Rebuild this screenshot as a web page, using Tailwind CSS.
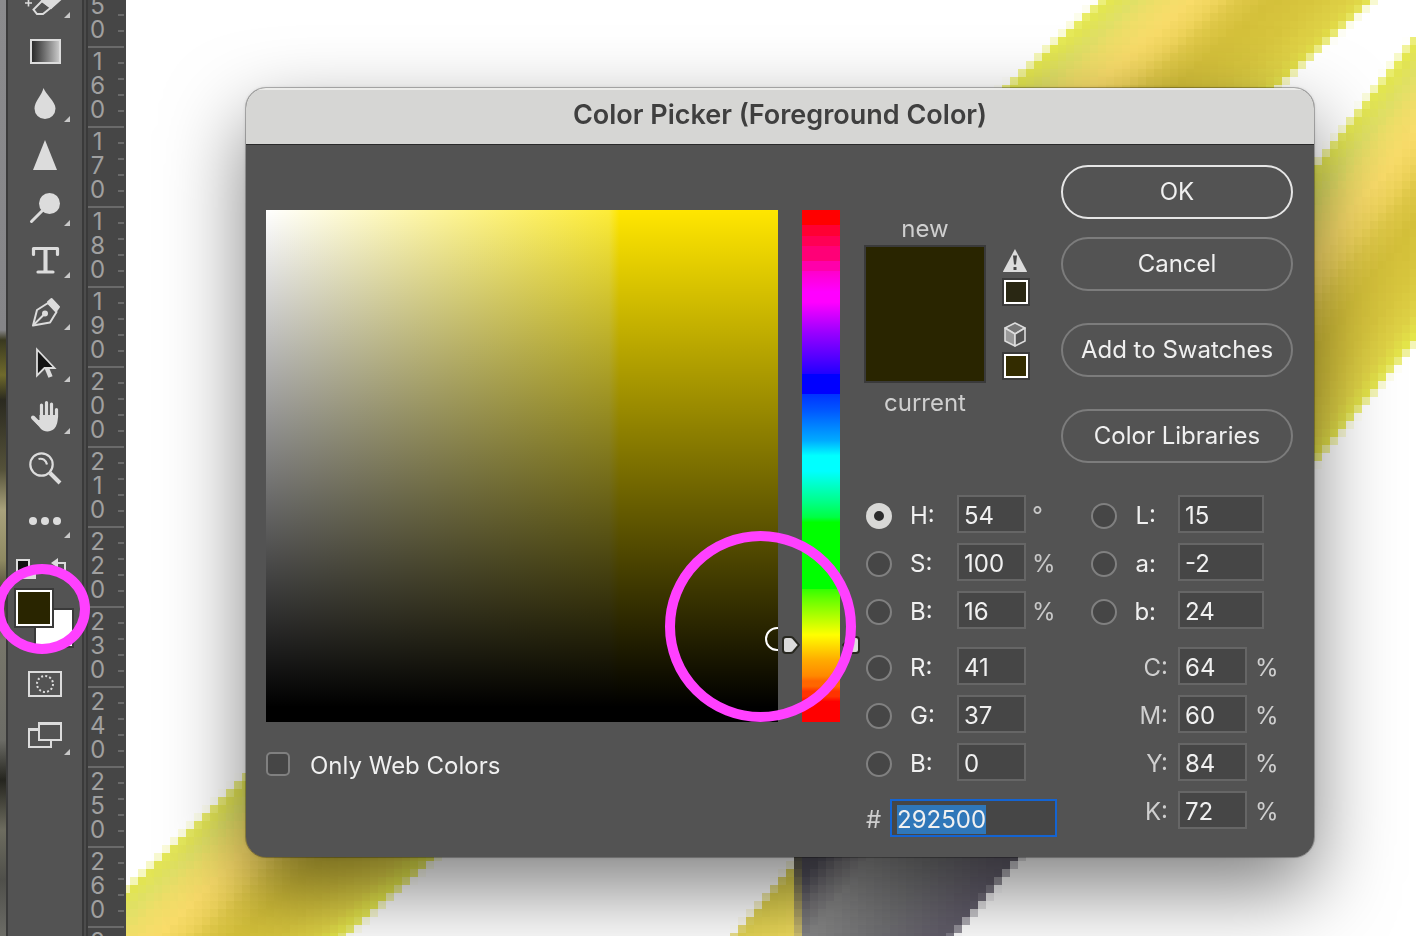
<!DOCTYPE html>
<html lang="en">
<head>
    <meta charset="UTF-8">
    <meta name="viewport" content="width=device-width, initial-scale=1.0">
    <title>Color Picker</title>
    <script src="https://cdn.jsdelivr.net/npm/@tailwindcss/browser@4"></script>
</head>
<body class="relative flex h-screen overflow-hidden bg-white font-['Inter',sans-serif] text-2xl text-[#f0f0f0]">
    <!-- Desktop showing behind the app -->
    <div class="w-[6px] shrink-0 bg-[linear-gradient(#8b8b8d_0,#858588_330px,#3a3920_340px,#6f6a2c_375px,#2b2a20_400px,#55523a_470px,#a9a27c_510px,#8f8a62_560px,#3c3b2e_600px,#77766a_640px,#6c6c66_740px,#25251f_780px,#6d6c5f_830px,#4f4f4a_880px,#6c6c66_100%)]"></div>

    <!-- Toolbar -->
    <nav class="w-[78px] shrink-0 overflow-hidden border-x-2 border-[#3a3a3a] bg-[#535353] text-[#dcdcdc]" aria-label="Tools">
        <div class="-mt-[27px] flex flex-col">
            <button class="relative flex h-[52px] items-center justify-center" aria-label="Eraser">
                <svg class="size-10" viewBox="0 0 40 40" fill="none" stroke="currentColor" stroke-width="2"><path d="M0 24h7M3.500 20.500v7" stroke-width="1.600"/><path d="M17 22L28 11l8 9-10 9z" fill="currentColor"/><path d="M17 22l-8.500 8.500 3.500 4.500h6l8-6.500z"/></svg>
                <svg class="absolute right-3 bottom-[7px] size-[6px]" viewBox="0 0 6 6" fill="#c8c8c8"><path d="M6 0v6H0z"/></svg>
            </button>
            <button class="flex h-[52px] items-center justify-center" aria-label="Gradient">
                <span class="h-[25px] w-[31px] border-2 border-[#dcdcdc] bg-linear-to-r from-[#2c2c2c] to-[#c8c8c8]"></span>
            </button>
            <button class="relative flex h-[52px] items-center justify-center" aria-label="Blur">
                <svg class="size-10" viewBox="0 0 40 40" fill="currentColor"><path d="M18.500 5c2 6 12 13.500 12 20.500a10.500 10.500 0 0 1-21 0C9.500 18.500 17 12 18.500 5z"/></svg>
                <svg class="absolute right-3 bottom-[7px] size-[6px]" viewBox="0 0 6 6" fill="#c8c8c8"><path d="M6 0v6H0z"/></svg>
            </button>
            <button class="flex h-[52px] items-center justify-center" aria-label="Sharpen">
                <svg class="size-10" viewBox="0 0 40 40" fill="currentColor"><path d="M20 5l12 30H8z"/></svg>
            </button>
            <button class="relative flex h-[52px] items-center justify-center" aria-label="Dodge">
                <svg class="size-10" viewBox="0 0 40 40" fill="currentColor"><circle cx="24.500" cy="16.500" r="10.500"/><path d="M18 23L6.500 34.500" stroke="currentColor" stroke-width="3" stroke-linecap="round"/></svg>
                <svg class="absolute right-3 bottom-[7px] size-[6px]" viewBox="0 0 6 6" fill="#c8c8c8"><path d="M6 0v6H0z"/></svg>
            </button>
            <button class="relative flex h-[52px] items-center justify-center" aria-label="Type">
                <svg class="size-10" viewBox="0 0 40 40" fill="none" stroke="currentColor" stroke-width="3.200"><path d="M8.500 15.500V9.500h24v6M20.500 9.500v23M13 33h15" stroke-linecap="round" stroke-linejoin="round"/><path d="M20.500 9v24" stroke-width="4"/></svg>
                <svg class="absolute right-3 bottom-[7px] size-[6px]" viewBox="0 0 6 6" fill="#c8c8c8"><path d="M6 0v6H0z"/></svg>
            </button>
            <button class="relative flex h-[52px] items-center justify-center" aria-label="Pen">
                <svg class="size-10" viewBox="0 0 40 40" fill="none" stroke="currentColor" stroke-width="2" stroke-linejoin="round"><path d="M8 34.500l4-15.500 11-7 8.500 9-6.500 10.500z"/><path d="M9 33.500l10-10"/><circle cx="20" cy="22.500" r="2" fill="currentColor"/><path d="M26.500 8l7.500 8-2.500 3.500L23 11z" fill="currentColor"/></svg>
                <svg class="absolute right-3 bottom-[7px] size-[6px]" viewBox="0 0 6 6" fill="#c8c8c8"><path d="M6 0v6H0z"/></svg>
            </button>
            <button class="relative flex h-[52px] items-center justify-center" aria-label="Path selection">
                <svg class="size-10" viewBox="0 0 40 40"><path d="M21 23l4.500 11" stroke="currentColor" stroke-width="4.500"/><path d="M12 6.500v26l7.500-7.500h10z" fill="#151515" stroke="currentColor" stroke-width="1.800"/></svg>
                <svg class="absolute right-3 bottom-[7px] size-[6px]" viewBox="0 0 6 6" fill="#c8c8c8"><path d="M6 0v6H0z"/></svg>
            </button>
            <button class="relative flex h-[52px] items-center justify-center" aria-label="Hand">
                <svg class="size-10" viewBox="0 0 40 40" fill="none" stroke="currentColor" stroke-linecap="round"><path d="M16.500 10v14M21.500 7.500V24M26.500 9v15M31.500 14.500V22" stroke-width="3.200"/><path d="M8 22.500l6 6" stroke-width="4"/><path d="M14.500 20h18.500c0 6-1 11-4 14-4 3.500-10 3-13 0l-7-8.500 5.500-.5z" fill="currentColor" stroke="none"/></svg>
                <svg class="absolute right-3 bottom-[7px] size-[6px]" viewBox="0 0 6 6" fill="#c8c8c8"><path d="M6 0v6H0z"/></svg>
            </button>
            <button class="flex h-[52px] items-center justify-center" aria-label="Zoom">
                <svg class="size-10" viewBox="0 0 40 40" fill="none" stroke="currentColor" stroke-width="2.200"><circle cx="16.500" cy="17.500" r="11.200"/><path d="M13.500 12c4-1 7.500 1 8.500 5.500"/><path d="M25 26L35 36" stroke-width="4"/></svg>
            </button>
            <button class="relative flex h-[52px] items-center justify-center gap-1 pt-1" aria-label="Edit toolbar">
                <span class="size-2 rounded-full bg-[#dcdcdc]"></span>
                <span class="size-2 rounded-full bg-[#dcdcdc]"></span>
                <span class="size-2 rounded-full bg-[#dcdcdc]"></span>
                <svg class="absolute right-3 bottom-[7px] size-[6px]" viewBox="0 0 6 6" fill="#c8c8c8"><path d="M6 0v6H0z"/></svg>
            </button>
            <!-- Foreground / background swatches -->
            <div class="relative h-[113px]">
                <svg class="absolute top-3 left-2" width="60" height="24" viewBox="0 0 60 24" fill="none"><path d="M7 10h13v12H7z" fill="#dcdcdc"/><path d="M1 3h12v14H1z" fill="#111" stroke="#dcdcdc" stroke-width="2"/><path d="M42 6h7v12" stroke="#dcdcdc" stroke-width="2"/><path d="M42 1v10l-7-5z" fill="#dcdcdc"/></svg>
                <button class="absolute top-[63px] left-[26px] size-[40px] border-2 border-[#3a3a3a] bg-white" aria-label="Background color"></button>
                <button class="absolute top-[43px] left-[6px] size-[40px] border-2 border-[#3a3a3a] bg-white p-[2px]" aria-label="Foreground color"><span class="block size-full bg-[#292500]"></span></button>
            </div>
            <button class="flex h-[52px] items-center justify-center" aria-label="Quick mask">
                <svg class="size-10" viewBox="0 0 40 40" fill="none" stroke="currentColor" stroke-width="2"><path d="M4 8h32v24H4z"/><circle cx="20" cy="20" r="8" stroke-dasharray="2 2.190"/></svg>
            </button>
            <button class="relative flex h-[52px] items-center justify-center" aria-label="Screen mode">
                <svg class="size-10" viewBox="0 0 40 40" fill="#535353" stroke="currentColor" stroke-width="2"><path d="M4 13h22v18H4z"/><path d="M3 13.500h10" stroke-width="3"/><path d="M14 7h22v17H14z"/><path d="M13 7.500h24" stroke-width="3"/></svg>
                <svg class="absolute right-3 bottom-[7px] size-[6px]" viewBox="0 0 6 6" fill="#c8c8c8"><path d="M6 0v6H0z"/></svg>
            </button>
        </div>
    </nav>

    <!-- Vertical ruler -->
    <div class="w-[42px] shrink-0 overflow-hidden border-l-2 border-[#4c4c4c] bg-[#464646]">
        <div id="ruler" class="-mt-[34px] border-l-2 border-[#3a3a3a] pr-[2px]"></div>
    </div>

    <!-- Document -->
    <main class="relative flex-1 overflow-hidden">
        <canvas id="artwork" width="162" height="118" class="absolute -top-[3px] -left-1 h-[944px] w-[1296px] max-w-none [image-rendering:pixelated]"></canvas>

        <!-- Color picker dialog -->
        <section class="absolute top-[88px] right-[102px] left-[120px] overflow-hidden rounded-[20px] bg-[#535353] pb-5 shadow-[0_0_4px_rgba(0,0,0,0.15),0_32px_80px_rgba(0,0,0,0.5)] outline outline-black/25" aria-labelledby="title">
            <header class="flex h-[57px] items-center justify-center border-t-2 border-b border-t-[#ececea] border-b-[#2a2a2a] bg-[#d6d6d4] pb-1">
                <h1 id="title" class="text-[27px] font-semibold text-[#3f3f3f]">Color Picker (Foreground Color)</h1>
            </header>

            <div class="flex pr-[21px] pl-5">
                <div class="shrink-0 pt-[65px]">
                    <div class="flex gap-6">
                        <div class="relative size-[512px] overflow-hidden bg-[linear-gradient(transparent,#000_97%),linear-gradient(90deg,#fff,#fdec38_67%,#ffe600_69%)]">
                            <span class="absolute top-[417px] left-[499px] size-6 rounded-full border-2 border-white"></span>
                        </div>
                        <div class="relative w-[38px] bg-[linear-gradient(#f00_3%,#f03_3%,#f03_5%,#f05_5%,#f05_7%,#f07_7%,#f07_10%,#f0a_10%,#f0a_12%,#f0c_12%,#f0f_16%,#f0f_18%,#90f_24%,#5000ff_29%,#20f_32%,#00f_32%,#00f_36%,#03f_36%,#05f_39%,#0080ff_42%,#0af_45%,#0ff_48%,#0ff_51%,#0f8_57%,#0f4_60%,#0f0_61%,#0f0_74%,#3f0_74%,#6f0_76%,#ff0_83%,#fc0_86%,#fa0_88%,#f80_91%,#f60_92%,#f60_93%,#f30_94%,#f30_95%,#f00_96%)]">
                            <svg class="absolute top-[426px] -left-5" width="18" height="18" viewBox="0 0 18 18"><path d="M4 1h4q2 0 3 1l6 7-6 7q-1 1-3 1H4q-3 0-3-3V4q0-3 3-3z" fill="#dcdcdc" stroke="#282820" stroke-width="2"/></svg>
                            <svg class="absolute top-[426px] -right-5" width="18" height="18" viewBox="0 0 18 18"><path d="M14 1h-4q-2 0-3 1L1 9l6 7q1 1 3 1h4q3 0 3-3V4q0-3-3-3z" fill="#dcdcdc" stroke="#282820" stroke-width="2"/></svg>
                        </div>
                    </div>
                    <div class="mt-[30px] flex h-6 items-center">
                        <input type="checkbox" id="web-only" class="size-6 appearance-none rounded-[5px] border-2 border-[#808080] bg-[#464646]">
                        <label for="web-only" class="mt-1 ml-5">Only Web Colors</label>
                    </div>
                </div>

                <div class="ml-6 flex-1 pt-5">
                    <div class="flex justify-between">
                        <div class="flex gap-4">
                            <div class="w-[122px] pt-[52px] text-center leading-6 text-[#cfcfcf]">
                                <p>new</p>
                                <div class="mt-1 mb-2 h-[138px] border-2 border-[#3a3a3a] bg-[#292500]"></div>
                                <p>current</p>
                            </div>
                            <div class="flex flex-col items-center pt-[84px]">
                                <svg width="28" height="24" viewBox="0 0 28 24"><path d="M13 0l12 22.500q0 .5-1 .5H2q-1 0-1-.5z" fill="#dcdcdc"/><path d="M11 6.500h4l-1 9h-2zM11.500 18h3v3h-3z" fill="#464646"/></svg>
                                <button class="mt-[5px] size-7 border-2 border-[#3a3a3a] bg-white p-[2px]" aria-label="Use closest printable color"><span class="block size-full bg-[#292713]"></span></button>
                                <svg class="mt-4" width="26" height="26" viewBox="0 0 26 26" stroke="#dcdcdc" stroke-width="1.600" stroke-linejoin="round"><path d="M12 1l10 5-10 6L2 6z" fill="#777"/><path d="M2 6l10 6v12L2 19z" fill="#999"/><path d="M22 6l-10 6v12l10-5z" fill="#535353"/></svg>
                                <button class="mt-1 size-7 border-2 border-[#3a3a3a] bg-white p-[2px]" aria-label="Use closest web color"><span class="block size-full bg-[#332c00]"></span></button>
                            </div>
                        </div>
                        <div class="flex w-[232px] flex-col">
                            <button class="h-[54px] rounded-full border-2 border-[#e6e6e6]">OK</button>
                            <button class="mt-[18px] h-[54px] rounded-full border-2 border-[#7c7c7c]">Cancel</button>
                            <button class="mt-8 h-[54px] rounded-full border-2 border-[#7c7c7c]">Add to Swatches</button>
                            <button class="mt-8 h-[54px] rounded-full border-2 border-[#7c7c7c]">Color Libraries</button>
                        </div>
                    </div>

                    <form class="mt-8 flex justify-between">
                        <div class="flex flex-col gap-[10px]">
                            <div class="flex h-[38px] items-center pl-[2px]">
                                <input type="radio" name="channel" id="ch-h" checked class="mt-1 size-[26px] appearance-none rounded-full border-2 border-[#808080] bg-[#464646] checked:border-[8px] checked:border-[#d8d8d6] checked:bg-[#2c2c2c]">
                                <label for="ch-h" class="mt-1 ml-[18px] w-[47px]">H:</label>
                                <input type="text" aria-label="Hue" value="54" class="h-[38px] w-[69px] border-2 border-[#666] bg-[#464646] pt-[3px] pl-[5px]">
                                <span class="mt-1 ml-[6px] text-[#c8c8c8]">°</span>
                            </div>
                            <div class="flex h-[38px] items-center pl-[2px]">
                                <input type="radio" name="channel" id="ch-s" class="mt-1 size-[26px] appearance-none rounded-full border-2 border-[#808080] bg-[#464646]">
                                <label for="ch-s" class="mt-1 ml-[18px] w-[47px]">S:</label>
                                <input type="text" aria-label="Saturation" value="100" class="h-[38px] w-[69px] border-2 border-[#666] bg-[#464646] pt-[3px] pl-[5px]">
                                <span class="mt-1 ml-[6px] text-[#c8c8c8]">%</span>
                            </div>
                            <div class="flex h-[38px] items-center pl-[2px]">
                                <input type="radio" name="channel" id="ch-b" class="mt-1 size-[26px] appearance-none rounded-full border-2 border-[#808080] bg-[#464646]">
                                <label for="ch-b" class="mt-1 ml-[18px] w-[47px]">B:</label>
                                <input type="text" aria-label="Brightness" value="16" class="h-[38px] w-[69px] border-2 border-[#666] bg-[#464646] pt-[3px] pl-[5px]">
                                <span class="mt-1 ml-[6px] text-[#c8c8c8]">%</span>
                            </div>
                            <div class="mt-2 flex h-[38px] items-center pl-[2px]">
                                <input type="radio" name="channel" id="ch-r" class="mt-1 size-[26px] appearance-none rounded-full border-2 border-[#808080] bg-[#464646]">
                                <label for="ch-r" class="mt-1 ml-[18px] w-[47px]">R:</label>
                                <input type="text" aria-label="Red" value="41" class="h-[38px] w-[69px] border-2 border-[#666] bg-[#464646] pt-[3px] pl-[5px]">
                            </div>
                            <div class="flex h-[38px] items-center pl-[2px]">
                                <input type="radio" name="channel" id="ch-g" class="mt-1 size-[26px] appearance-none rounded-full border-2 border-[#808080] bg-[#464646]">
                                <label for="ch-g" class="mt-1 ml-[18px] w-[47px]">G:</label>
                                <input type="text" aria-label="Green" value="37" class="h-[38px] w-[69px] border-2 border-[#666] bg-[#464646] pt-[3px] pl-[5px]">
                            </div>
                            <div class="flex h-[38px] items-center pl-[2px]">
                                <input type="radio" name="channel" id="ch-blue" class="mt-1 size-[26px] appearance-none rounded-full border-2 border-[#808080] bg-[#464646]">
                                <label for="ch-blue" class="mt-1 ml-[18px] w-[47px]">B:</label>
                                <input type="text" aria-label="Blue" value="0" class="h-[38px] w-[69px] border-2 border-[#666] bg-[#464646] pt-[3px] pl-[5px]">
                            </div>
                            <div class="mt-2 flex h-[38px] items-center pl-[2px]">
                                <label for="hex" class="mt-1 w-6 text-[#cfcfcf]">#</label>
                                <input type="text" id="hex" value="292500" class="h-[38px] w-[167px] border-2 border-[#1464d2] bg-[#464646] pt-[2px] pl-[5px] outline-none selection:bg-[#2f77b9] selection:text-[#f0f0f0]">
                            </div>
                        </div>

                        <div class="flex w-[202px] flex-col gap-[10px]">
                            <div class="flex h-[38px] items-center">
                                <input type="radio" name="channel" id="ch-l" class="mt-1 size-[26px] appearance-none rounded-full border-2 border-[#808080] bg-[#464646]">
                                <label for="ch-l" class="mt-1 w-[39px] text-right">L:</label>
                                <input type="text" aria-label="Lightness" value="15" class="ml-[22px] h-[38px] w-[86px] border-2 border-[#666] bg-[#464646] pt-[3px] pl-[5px]">
                            </div>
                            <div class="flex h-[38px] items-center">
                                <input type="radio" name="channel" id="ch-a" class="mt-1 size-[26px] appearance-none rounded-full border-2 border-[#808080] bg-[#464646]">
                                <label for="ch-a" class="mt-1 w-[39px] text-right">a:</label>
                                <input type="text" aria-label="Lab a" value="-2" class="ml-[22px] h-[38px] w-[86px] border-2 border-[#666] bg-[#464646] pt-[3px] pl-[5px]">
                            </div>
                            <div class="flex h-[38px] items-center">
                                <input type="radio" name="channel" id="ch-lb" class="mt-1 size-[26px] appearance-none rounded-full border-2 border-[#808080] bg-[#464646]">
                                <label for="ch-lb" class="mt-1 w-[39px] text-right">b:</label>
                                <input type="text" aria-label="Lab b" value="24" class="ml-[22px] h-[38px] w-[86px] border-2 border-[#666] bg-[#464646] pt-[3px] pl-[5px]">
                            </div>
                            <div class="mt-2 flex h-[38px] items-center text-[#cfcfcf]">
                                <label for="cyan" class="mt-1 w-[77px] text-right">C:</label>
                                <input type="text" id="cyan" value="64" class="ml-[10px] h-[38px] w-[69px] border-2 border-[#666] bg-[#464646] pt-[3px] pl-[5px] text-[#f0f0f0]">
                                <span class="mt-1 ml-[8px]">%</span>
                            </div>
                            <div class="flex h-[38px] items-center text-[#cfcfcf]">
                                <label for="magenta" class="mt-1 w-[77px] text-right">M:</label>
                                <input type="text" id="magenta" value="60" class="ml-[10px] h-[38px] w-[69px] border-2 border-[#666] bg-[#464646] pt-[3px] pl-[5px] text-[#f0f0f0]">
                                <span class="mt-1 ml-[8px]">%</span>
                            </div>
                            <div class="flex h-[38px] items-center text-[#cfcfcf]">
                                <label for="yellow" class="mt-1 w-[77px] text-right">Y:</label>
                                <input type="text" id="yellow" value="84" class="ml-[10px] h-[38px] w-[69px] border-2 border-[#666] bg-[#464646] pt-[3px] pl-[5px] text-[#f0f0f0]">
                                <span class="mt-1 ml-[8px]">%</span>
                            </div>
                            <div class="flex h-[38px] items-center text-[#cfcfcf]">
                                <label for="black" class="mt-1 w-[77px] text-right">K:</label>
                                <input type="text" id="black" value="72" class="ml-[10px] h-[38px] w-[69px] border-2 border-[#666] bg-[#464646] pt-[3px] pl-[5px] text-[#f0f0f0]">
                                <span class="mt-1 ml-[8px]">%</span>
                            </div>
                        </div>
                    </form>
                </div>
            </div>
        </section>
    </main>

    <!-- Annotation rings -->
    <div class="pointer-events-none absolute top-[564px] -left-[6px] h-[90px] w-[96px] rounded-[50%] border-[10px] border-[#ff40ff]"></div>
    <div class="pointer-events-none absolute top-[531px] left-[665px] size-[191px] rounded-full border-[10px] border-[#ff40ff]"></div>

    <script>
        // ruler labels, one segment per 10 units
        const ruler = document.getElementById('ruler');
        for (let n = 150; n <= 270; n += 10) {
            const digits = String(n).split('').map(d => `<span>${d}</span>`).join('');
            ruler.innerHTML += `
                <div class="flex h-[80px] justify-between border-t-2 border-[#6a6a6a]">
                    <div class="flex flex-col items-center pl-[2px] pt-[2px] leading-6 text-[#a0a0a0]">${digits}</div>
                    <div class="w-[6px] bg-[repeating-linear-gradient(transparent_0,transparent_14px,#6a6a6a_14px,#6a6a6a_16px)]"></div>
                </div>`;
        }

        // artwork, drawn at 1/8 size and scaled up
        const ctx = document.getElementById('artwork').getContext('2d');
        ctx.scale(1 / 8, 1 / 8);
        ctx.translate(-122, 3);
        const GOLD = [[0, '#e6ea4c'], [.05, '#e2e454'], [.12, '#e0e066'], [.2, '#eede68'], [.32, '#f9dc6a'], [.42, '#efd45c'], [.5, '#dfc848'], [.62, '#d4c03a'], [.78, '#d8c63e'], [.92, '#dfd246'], [1, '#e4e64a']];
        const STEEL = [[0, '#504e5a'], [.1, '#747276'], [.2, '#868686'], [.45, '#727274'], [.7, '#625e6a'], [.95, '#585464'], [1, '#4a4852']];

        function band(points, from, to, stops) {
            const g = ctx.createLinearGradient(...from, ...to);
            stops.forEach(s => g.addColorStop(...s));
            ctx.fillStyle = g;
            ctx.beginPath();
            points.forEach(p => ctx.lineTo(...p));
            ctx.fill();
        }
        band([[1104, -3], [1376, -3], [1230, 130], [958, 130]], [1102, 0], [1227, 136], GOLD);
        band([[1440, 5], [1440, 312], [1290, 492], [1290, 198]], [1314, 165], [1459, 280], GOLD);
        band([[270, 752], [110, 905], [110, 950], [330, 950], [480, 817], [480, 752]], [126, 885], [250, 1018], GOLD);
        band([[830, 812], [794, 812], [794, 950], [722, 950], [836, 812]], [740, 850], [802, 940], [[0, '#d8d840'], [.5, '#dccf4c'], [1, '#f2dc60']]);
        band([[802, 812], [1056, 812], [942, 950], [802, 950]], [802, 880], [960, 1000], STEEL);
        band([[794, 812], [802, 812], [802, 950], [794, 950]], [794, 860], [794, 936], [[0, '#5c5a50'], [.4, '#8c8458'], [1, '#d0c070']]);

        const hex = document.getElementById('hex');
        hex.focus();
        hex.select();
    </script>
</body>
</html>
